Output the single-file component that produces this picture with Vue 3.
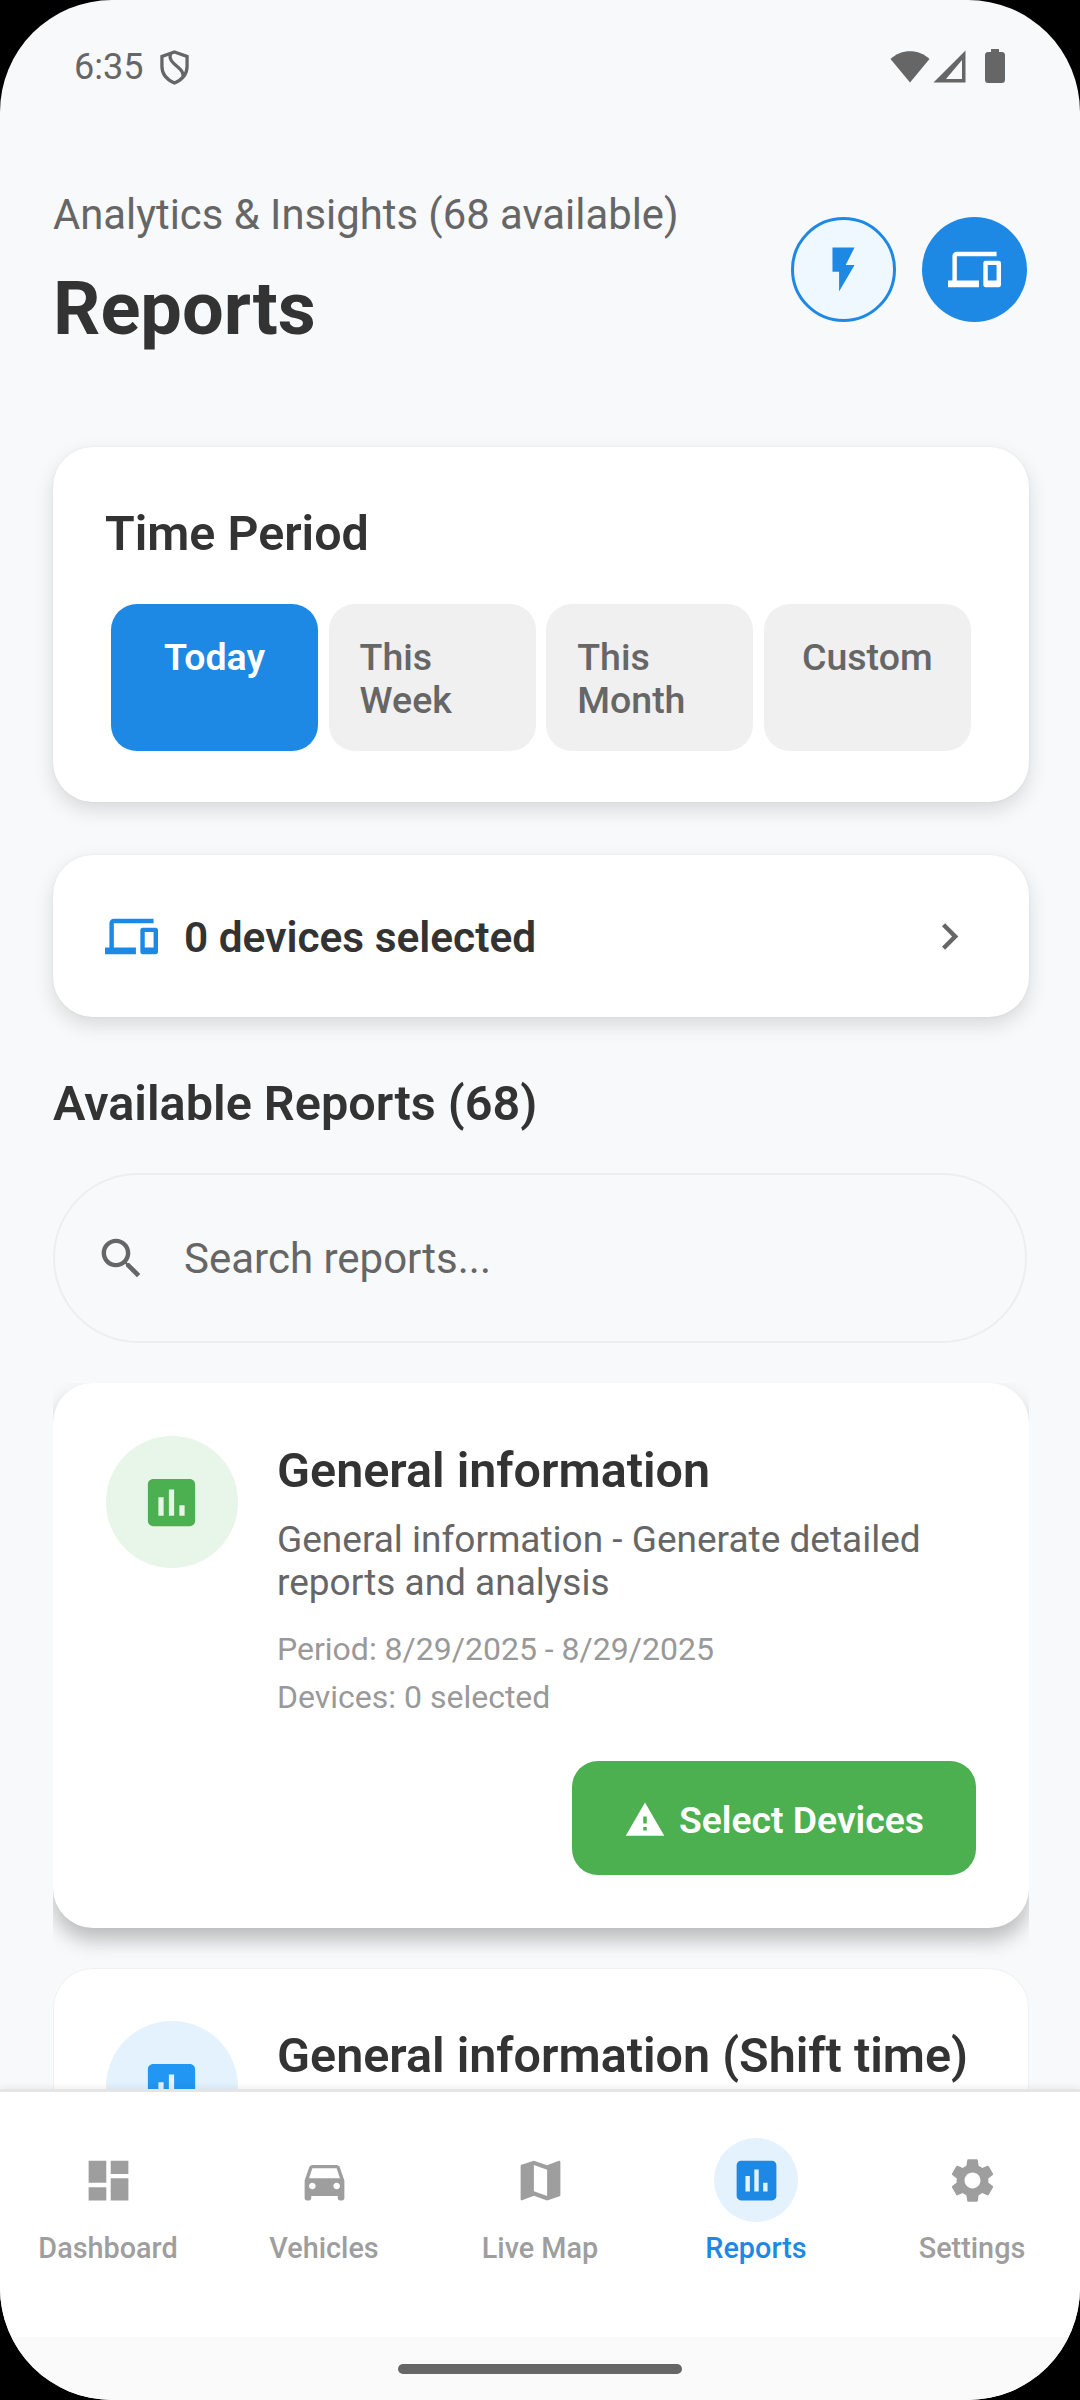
<script setup>
const periods = [
  { label: 'Today', active: true },
  { label: 'This Week' },
  { label: 'This Month' },
  { label: 'Custom' },
]

const navItems = [
  { label: 'Dashboard', icon: 'M3 13h8V3H3v10zm0 8h8v-6H3v6zm10 0h8V11h-8v10zm0-18v6h8V3h-8z' },
  { label: 'Vehicles', icon: 'M18.92 6.01C18.72 5.42 18.16 5 17.5 5h-11c-.66 0-1.21.42-1.42 1.01L3 12v8c0 .55.45 1 1 1h1c.55 0 1-.45 1-1v-1h12v1c0 .55.45 1 1 1h1c.55 0 1-.45 1-1v-8l-2.08-5.99zM6.5 16c-.83 0-1.5-.67-1.5-1.5S5.67 13 6.5 13s1.5.67 1.5 1.5S7.33 16 6.5 16zm11 0c-.83 0-1.5-.67-1.5-1.5s.67-1.5 1.5-1.5 1.5.67 1.5 1.5-.67 1.5-1.5 1.5zM5 11l1.5-4.5h11L19 11H5z' },
  { label: 'Live Map', icon: 'M20.5 3l-.16.03L15 5.1 9 3 3.36 4.9c-.21.07-.36.25-.36.48V20.5c0 .28.22.5.5.5l.16-.03L9 18.9l6 2.1 5.64-1.9c.21-.07.36-.25.36-.48V3.5c0-.28-.22-.5-.5-.5zM15 19l-6-2.11V5l6 2.11V19z' },
  { label: 'Reports', active: true, icon: 'M19 3H5c-1.1 0-2 .9-2 2v14c0 1.1.9 2 2 2h14c1.1 0 2-.9 2-2V5c0-1.1-.9-2-2-2zM9 17H7v-7h2v7zm4 0h-2V7h2v10zm4 0h-2v-4h2v4z' },
  { label: 'Settings', icon: 'M19.14 12.94c.04-.3.06-.61.06-.94 0-.32-.02-.64-.07-.94l2.03-1.58c.18-.14.23-.41.12-.61l-1.92-3.32c-.12-.22-.37-.29-.59-.22l-2.39.96c-.5-.38-1.03-.7-1.62-.94l-.36-2.54c-.04-.24-.24-.41-.48-.41h-3.84c-.24 0-.43.17-.47.41l-.36 2.54c-.59.24-1.13.57-1.62.94l-2.39-.96c-.22-.08-.47 0-.59.22L2.74 8.87c-.12.21-.08.47.12.61l2.03 1.58c-.05.3-.09.63-.09.94s.02.64.07.94l-2.03 1.58c-.18.14-.23.41-.12.61l1.92 3.32c.12.22.37.29.59.22l2.39-.96c.5.38 1.03.7 1.62.94l.36 2.54c.05.24.24.41.48.41h3.84c.24 0 .44-.17.47-.41l.36-2.54c.59-.24 1.13-.56 1.62-.94l2.39.96c.22.08.47 0 .59-.22l1.92-3.32c.12-.22.07-.47-.12-.61l-2.01-1.58zM12 15.6c-1.98 0-3.6-1.62-3.6-3.6s1.62-3.6 3.6-3.6 3.6 1.62 3.6 3.6-1.62 3.6-3.6 3.6z' },
]

const assessment = 'M19 3H5c-1.1 0-2 .9-2 2v14c0 1.1.9 2 2 2h14c1.1 0 2-.9 2-2V5c0-1.1-.9-2-2-2zM9 17H7v-7h2v7zm4 0h-2V7h2v10zm4 0h-2v-4h2v4z'
const devices = 'M4 6h18V4H4c-1.1 0-2 .9-2 2v11H0v3h14v-3H4V6zm19 2h-6c-.55 0-1 .45-1 1v10c0 .55.45 1 1 1h6c.55 0 1-.45 1-1V9c0-.55-.45-1-1-1zm-1 9h-4v-7h4v7z'
</script>

<template>
  <div class="phone">
    <div class="status">
      <div class="status-left">
        <span class="clock">6:35</span>
        <svg class="shield" viewBox="0 0 30 36" fill="none" stroke="#666" stroke-width="3.4">
          <path d="M15 2 L28 6.500 V17 C28 25.500 22 31 15 34 C8 31 2 25.500 2 17 V6.500 Z" />
          <path d="M11 3 C8 12 17 15 21 20 C23 22 24 24 24 27" />
        </svg>
      </div>
      <div class="status-right">
        <svg class="wifi" viewBox="0 0 40 33"><path d="M0.500 9 C11 -1.500 29 -1.500 39.500 9 L20 32.500 Z" fill="#666" /></svg>
        <svg class="signal" viewBox="0 0 33 33"><path fill="#666" fill-rule="evenodd" d="M32.500.5 V32.500 H0.500 Z M29 10 L13 29 H29 Z" /></svg>
        <svg class="battery" viewBox="0 0 20 34"><path fill="#666" d="M6 0h8v3h3c1.700 0 3 1.300 3 3v25c0 1.700-1.300 3-3 3H3c-1.700 0-3-1.300-3-3V6c0-1.700 1.300-3 3-3h3z" /></svg>
      </div>
    </div>

    <main class="content">
      <header class="head">
        <div>
          <p class="subtitle">Analytics &amp; Insights (68 available)</p>
          <h1 class="title">Reports</h1>
        </div>
        <div class="head-actions">
          <button class="round round-light">
            <svg viewBox="0 0 24 24" class="round-icon"><path d="M7 2v11h3v9l7-12h-4l4-8z" fill="#1e88e5" /></svg>
          </button>
          <button class="round round-solid">
            <svg viewBox="0 0 24 24" class="round-icon"><path :d="devices" fill="#fff" /></svg>
          </button>
        </div>
      </header>

      <section class="card period">
        <h2 class="period-title">Time Period</h2>
        <div class="period-row">
          <button v-for="p in periods" :key="p.label" class="period-btn" :class="{ active: p.active }">{{ p.label }}</button>
        </div>
      </section>

      <section class="card device-row">
        <svg viewBox="0 0 24 24" class="device-icon"><path :d="devices" fill="#1e88e5" /></svg>
        <span class="device-text">0 devices selected</span>
        <svg viewBox="0 0 24 24" class="chevron"><path d="M10 6L8.590 7.410 13.170 12l-4.580 4.590L10 18l6-6z" fill="#666" /></svg>
      </section>

      <h2 class="section-title">Available Reports (68)</h2>

      <div class="search">
        <svg viewBox="0 0 24 24" class="search-icon"><path d="M15.500 14h-.79l-.28-.27C15.410 12.590 16 11.110 16 9.500 16 5.910 13.090 3 9.500 3S3 5.910 3 9.500 5.910 16 9.500 16c1.610 0 3.090-.59 4.230-1.570l.27.28v.79l5 4.990L20.490 19l-4.990-5zm-6 0C7.010 14 5 11.990 5 9.500S7.010 5 9.500 5 14 7.010 14 9.500 11.990 14 9.500 14z" fill="#666" /></svg>
        <span class="search-text">Search reports...</span>
      </div>

      <!-- list clips the card shadow at its own edges, like the app's scroller -->
      <div class="report-list">
        <article class="report">
          <div class="report-top">
            <div class="report-circle green">
              <svg viewBox="0 0 24 24" class="report-icon"><path :d="assessment" fill="#4caf50" /></svg>
            </div>
            <div class="report-body">
              <h3 class="report-title">General information</h3>
              <p class="report-desc">General information - Generate detailed reports and analysis</p>
              <p class="report-meta first">Period: 8/29/2025 - 8/29/2025</p>
              <p class="report-meta">Devices: 0 selected</p>
            </div>
          </div>
          <div class="report-actions">
            <button class="select-btn">
              <svg viewBox="0 0 24 24" class="warn-icon"><path d="M1 21h22L12 2 1 21zm12-3h-2v-2h2v2zm0-4h-2v-4h2v4z" fill="#fff" /></svg>
              Select Devices
            </button>
          </div>
        </article>

        <article class="report second">
          <div class="report-top">
            <div class="report-circle blue">
              <svg viewBox="0 0 24 24" class="report-icon"><path :d="assessment" fill="#2196f3" /></svg>
            </div>
            <div class="report-body">
              <h3 class="report-title">General information (Shift time)</h3>
            </div>
          </div>
        </article>
      </div>
    </main>

    <nav class="nav">
      <div v-for="item in navItems" :key="item.label" class="nav-item" :class="{ active: item.active }">
        <div class="nav-icon-wrap">
          <svg viewBox="0 0 24 24" class="nav-icon"><path :d="item.icon" fill="currentColor" /></svg>
        </div>
        <span class="nav-label">{{ item.label }}</span>
      </div>
    </nav>

    <div class="gesture">
      <div class="gesture-bar"></div>
    </div>
  </div>
</template>

<style>
html, body {
  margin: 0;
  background: #000;
}
</style>

<style scoped>
.phone {
  width: 1080px;
  height: 2400px;
  border-radius: 112px;
  overflow: hidden;
  background: #f8f9fa;
  display: flex;
  flex-direction: column;
  font-family: Roboto, "Noto Sans", sans-serif;
}

button {
  font-family: inherit;
  border: none;
  padding: 0;
}

p, h1, h2, h3 {
  margin: 0;
}

/* status bar */
.status {
  height: 132px;
  flex: none;
  display: flex;
  justify-content: space-between;
  align-items: center;
  padding: 0 75px 0 74px;
  box-sizing: border-box;
}

.status-left, .status-right {
  display: flex;
  align-items: center;
}

.clock {
  font-size: 36px;
  color: #666;
  margin-top: 2px;
}

.shield {
  width: 29px;
  height: 35px;
  margin: 3px 0 0 17px;
}

.wifi {
  width: 40px;
  height: 33px;
}

.signal {
  width: 33px;
  height: 33px;
  margin-left: 3px;
}

.battery {
  width: 20px;
  height: 34px;
  margin-left: 19px;
}

.content {
  flex: 1;
  min-height: 0;
  overflow: hidden;
  padding: 0 51px 0 53px;
}

/* header */
.head {
  display: flex;
  justify-content: space-between;
  align-items: flex-start;
  height: 175px;
  margin-top: 58px;
  padding-right: 2px;
}

.subtitle {
  font-size: 41.8px;
  line-height: 50px;
  color: #666;
}

.title {
  font-size: 74px;
  line-height: 84px;
  font-weight: 700;
  color: #333;
  margin-top: 27px;
}

.head-actions {
  display: flex;
  gap: 26px;
  margin-top: 27px;
}

.round {
  width: 105px;
  height: 105px;
  border-radius: 50%;
  box-sizing: border-box;
  display: flex;
  align-items: center;
  justify-content: center;
}

.round-light {
  background: #f0f8ff;
  border: 3px solid #1e88e5;
}

.round-solid {
  background: #1e88e5;
}

.round-icon {
  width: 53px;
  height: 53px;
}

/* cards */
.card {
  background: #fff;
  border-radius: 40px;
  box-shadow: 0 8px 20px rgba(0, 0, 0, 0.13), 0 0 3px rgba(0, 0, 0, 0.05);
}

.period {
  margin-top: 82px;
  height: 355px;
  box-sizing: border-box;
  padding: 59px 52px 0;
}

.period-title {
  font-size: 48.4px;
  line-height: 56px;
  font-weight: 600;
  color: #333;
}

.period-row {
  display: flex;
  gap: 10.600px;
  margin-top: 42px;
  padding: 0 6px;
}

.period-btn {
  width: 207px;
  height: 147px;
  flex: none;
  box-sizing: border-box;
  padding: 32px 31px 0;
  border-radius: 26px;
  background: #f0f0f0;
  color: #666;
  font-size: 37.500px;
  line-height: 43px;
  font-weight: 500;
  text-align: left;
  display: flex;
  justify-content: center;
  align-items: flex-start;
}

.period-btn.active {
  background: #1e88e5;
  color: #fff;
  font-weight: 600;
}

.device-row {
  margin-top: 53px;
  height: 162px;
  box-sizing: border-box;
  padding: 0 53px 0 52px;
  display: flex;
  align-items: center;
}

.device-icon {
  width: 53px;
  height: 53px;
  flex: none;
}

.device-text {
  font-size: 42.400px;
  font-weight: 600;
  color: #333;
  margin: 2px 0 0 26px;
  flex: 1;
}

.chevron {
  width: 53px;
  height: 53px;
}

.section-title {
  font-size: 48.600px;
  line-height: 56px;
  font-weight: 600;
  color: #333;
  margin-top: 59px;
}

/* search */
.search {
  margin-top: 41px;
  width: 974px;
  height: 170px;
  box-sizing: border-box;
  border: 2px solid #eee;
  border-radius: 85px;
  display: flex;
  align-items: center;
  padding-left: 40px;
}

.search-icon {
  width: 53px;
  height: 53px;
}

.search-text {
  font-size: 42px;
  color: #666;
  margin-left: 36px;
}

/* report cards */
.report-list {
  margin-top: 40px;
  overflow: hidden;
}

.report {
  background: #fff;
  border-radius: 40px;
  box-shadow: 0 12px 20px rgba(0, 0, 0, 0.25);
  padding: 53px;
  height: 545px;
  box-sizing: border-box;
}

.report.second {
  margin-top: 40px;
  box-shadow: inset 0 0 0 1px #f0f0f0;
}

.report-top {
  display: flex;
}

.report-circle {
  width: 132px;
  height: 132px;
  border-radius: 50%;
  flex: none;
  display: flex;
  align-items: center;
  justify-content: center;
}

.green {
  background: #e8f5e9;
}

.blue {
  background: #e3f2fd;
}

.report-icon {
  width: 63px;
  height: 63px;
  margin-left: -1px;
}

.report-body {
  margin-left: 39px;
  padding-top: 7px;
  min-width: 0;
}

.report-title {
  font-size: 48.500px;
  line-height: 56px;
  font-weight: 600;
  color: #333;
  white-space: nowrap;
}

.report-desc {
  font-size: 37px;
  line-height: 43px;
  color: #666;
  margin-top: 19px;
}

.report-meta {
  font-size: 32px;
  line-height: 48px;
  color: #999;
}

.report-meta.first {
  margin-top: 21px;
}

.report-actions {
  display: flex;
  justify-content: flex-end;
  margin-top: 40px;
}

.select-btn {
  width: 404px;
  height: 114px;
  box-sizing: border-box;
  padding-top: 3px;
  border-radius: 26px;
  background: #4caf50;
  color: #fff;
  font-size: 37.300px;
  font-weight: 600;
  display: flex;
  align-items: center;
  justify-content: center;
  gap: 13px;
}

.warn-icon {
  width: 42px;
  height: 42px;
}

/* bottom nav */
.nav {
  flex: none;
  height: 248px;
  box-sizing: border-box;
  background: #fff;
  border-top: 3px solid #e5e5e5;
  box-shadow: 0 -3px 6px rgba(0, 0, 0, 0.05);
  display: flex;
  position: relative;
}

.nav-item {
  flex: 1;
  display: flex;
  flex-direction: column;
  align-items: center;
  color: #9e9e9e;
  padding-top: 46px;
}

.nav-item.active {
  color: #1e88e5;
}

.nav-icon-wrap {
  width: 84px;
  height: 84px;
  border-radius: 50%;
  display: flex;
  align-items: center;
  justify-content: center;
}

.nav-item.active .nav-icon-wrap {
  background: #e3f2fd;
}

.nav-icon {
  width: 53px;
  height: 53px;
}

.nav-label {
  font-size: 28.800px;
  line-height: 34px;
  font-weight: 500;
  margin-top: 9px;
}

.gesture {
  flex: none;
  height: 63px;
  background: #fafafa;
  display: flex;
  justify-content: center;
  padding-top: 27px;
  box-sizing: border-box;
}

.gesture-bar {
  width: 284px;
  height: 10px;
  border-radius: 5px;
  background: #666;
}
</style>
